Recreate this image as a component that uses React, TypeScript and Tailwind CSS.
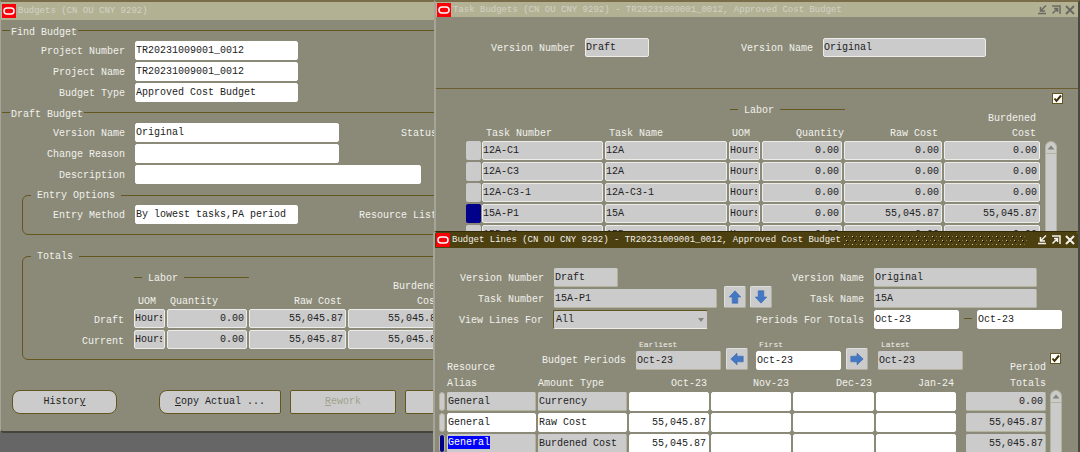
import type { ReactNode } from 'react';
import clsx from 'clsx';

type FieldProps = {
  id?: string;
  label?: string;
  value?: string;
  className?: string;
  tone?: 'white' | 'gray' | 'sunken';
  align?: 'left' | 'right';
};

const tones = {
  white: 'bg-white border-white',
  gray: 'bg-[#cbcbcb] border-[#ecece8]',
  sunken: 'bg-[#cbcbcb] border-[#cbcbcb] border-r-[#b4b39c] border-b-[#b4b39c]',
};

function Field({ id, label, value = '', className, tone = 'white', align = 'left' }: FieldProps) {
  return (
    <input
      id={id}
      aria-label={label}
      defaultValue={value}
      readOnly={tone !== 'white'}
      className={clsx(
        'block h-[19px] rounded-xs border pr-0.5 pb-px text-[#222] outline-none',
        tones[tone],
        align === 'right' && 'text-right',
        className
      )}
    />
  );
}

function Label({ htmlFor, className, children }: { htmlFor: string; className?: string; children: ReactNode }) {
  return (
    <label htmlFor={htmlFor} className={clsx('shrink-0 pt-[5px] pr-2.5 text-right whitespace-nowrap', className)}>
      {children}
    </label>
  );
}

function OracleLogo() {
  return (
    <svg viewBox="0 0 14 14" className="size-3.5 shrink-0" aria-hidden="true">
      <rect width="14" height="14" fill="#fb0007" />
      <rect x="2" y="4" width="10" height="6" rx="3" fill="none" stroke="#fff" strokeWidth="1.5" />
    </svg>
  );
}

function WindowControls() {
  return (
    <div className="flex shrink-0 gap-0.5 pr-0.5">
      <button type="button" aria-label="Minimize" className="size-3">
        <svg viewBox="0 0 12 12" fill="none" stroke="currentColor" strokeWidth="1.5">
          <path d="M10 1.5 5 6.5M4.5 3v4H9M2 9.500h8" />
        </svg>
      </button>
      <button type="button" aria-label="Maximize" className="size-3">
        <svg viewBox="0 0 12 12" fill="none" stroke="currentColor" strokeWidth="1.5">
          <path d="M2.500 9.500 7 5M4 4.500h3.500V8M2 2h8v8" />
        </svg>
      </button>
      <button type="button" aria-label="Close" className="size-3">
        <svg viewBox="0 0 12 12" fill="none" stroke="currentColor" strokeWidth="2">
          <path d="m2 2 8 8M10 2l-8 8" />
        </svg>
      </button>
    </div>
  );
}

function TitleBar({ title, active, controls, className }: { title: string; active?: boolean; controls?: boolean; className?: string }) {
  return (
    <header
      className={clsx(
        'flex items-center gap-0.5 pl-px text-[9px]',
        active ? 'bg-[#4d4010] text-[#f0efe8]' : 'bg-[#b3b194] text-[#d2d1c4]',
        className
      )}
    >
      <OracleLogo />
      <h2 className="shrink-0 whitespace-pre">{title}</h2>
      <div className="flex-1 pr-1.5">
        {active && (
          <svg className="block h-2.5 w-full" aria-hidden="true">
            <defs>
              <pattern id="grip" width="8" height="8" patternUnits="userSpaceOnUse">
                <rect x="1" y="1" width="1" height="1" fill="#d0c8a6" />
                <rect x="2" y="2" width="1" height="1" fill="#0f0b00" />
                <rect x="5" y="1" width="1" height="1" fill="#857947" />
                <rect x="3" y="5" width="1" height="1" fill="#d0c8a6" />
                <rect x="4" y="6" width="1" height="1" fill="#0f0b00" />
                <rect x="7" y="5" width="1" height="1" fill="#857947" />
              </pattern>
            </defs>
            <rect width="100%" height="100%" fill="url(#grip)" />
          </svg>
        )}
      </div>
      {controls && (
        <div className={active ? 'text-[#f4f3ee]' : 'text-[#6b6a62]'}>
          <WindowControls />
        </div>
      )}
    </header>
  );
}

function SectionHeading({ children }: { children: ReactNode }) {
  return (
    <div className="flex h-3.5 items-start">
      <span className="mt-1 h-px w-2 bg-[#64561f]" />
      <h3 className="px-px pt-px">{children}</h3>
      <span className="mt-1 h-px flex-1 bg-[#64561f]" />
    </div>
  );
}

function LaborHeading({ className }: { className?: string }) {
  return (
    <div className={clsx('flex h-3 items-start', className)}>
      <span className="mt-1 h-px w-2 bg-[#64561f]" />
      <span className="px-1.5">Labor</span>
      <span className="mt-1 h-px flex-1 bg-[#64561f]" />
    </div>
  );
}

function ScrollBar() {
  return (
    <div className="w-3 shrink-0 rounded-t-md border border-[#b4b39c] bg-[#cbcbcb]">
      <button type="button" aria-label="Scroll up" className="flex h-3 w-full items-center justify-center border-b border-[#b4b39c]">
        <svg viewBox="0 0 8 5" className="w-2" aria-hidden="true">
          <path d="M4 0.500 7.500 4.500h-7z" fill="#85847a" />
        </svg>
      </button>
    </div>
  );
}

function CheckBox({ label }: { label: string }) {
  return (
    <span className="relative block size-[11px]">
      <input
        type="checkbox"
        aria-label={label}
        defaultChecked
        className="block size-[11px] appearance-none border border-[#64561f] bg-white"
      />
      <svg viewBox="0 0 11 11" className="pointer-events-none absolute inset-0" aria-hidden="true">
        <path d="m2.500 5.500 2 2.500L9 2.500" fill="none" stroke="#3c3108" strokeWidth="2" />
      </svg>
    </span>
  );
}

const rotations = {
  up: '',
  right: 'rotate-90',
  down: 'rotate-180',
  left: '-rotate-90',
};

function ArrowButton({ direction, label }: { direction: keyof typeof rotations; label: string }) {
  return (
    <button
      type="button"
      aria-label={label}
      className="flex size-[22px] shrink-0 items-center justify-center rounded-xs border border-[#dededc] border-r-[#b0afa0] border-b-[#b0afa0] bg-[#cbcbcb]"
    >
      <svg viewBox="0 0 14 14" className={clsx('size-3.5', rotations[direction])} aria-hidden="true">
        <path d="M7 .8 12.800 7H9.800v6.200H4.200V7H1.200z" fill="#4478c4" stroke="#3a69ad" strokeWidth=".6" />
      </svg>
    </button>
  );
}

function BudgetsWindow() {
  const totals = ['Draft', 'Current'];

  return (
    <section className="absolute top-0 left-0 h-[433px] w-[760px] rounded-bl-sm border-t-2 border-b-2 border-l border-t-[#796c49] border-b-[#45443a] border-l-[#a5a497] bg-[#8b8a78]">
      <TitleBar title="Budgets (CN OU CNY 9292)" className="h-[18px]" />
      <div className="pt-1.5 pl-px">
        <SectionHeading>Find Budget</SectionHeading>
        <div className="flex flex-col gap-0.5 pt-px">
          <div className="flex">
            <Label htmlFor="project-number" className="w-[133px]">Project Number</Label>
            <Field id="project-number" value="TR20231009001_0012" className="w-[163px]" />
          </div>
          <div className="flex">
            <Label htmlFor="project-name" className="w-[133px]">Project Name</Label>
            <Field id="project-name" value="TR20231009001_0012" className="w-[163px]" />
          </div>
          <div className="flex">
            <Label htmlFor="budget-type" className="w-[133px]">Budget Type</Label>
            <Field id="budget-type" value="Approved Cost Budget" className="w-[163px]" />
          </div>
        </div>

        <div className="pt-1.5">
          <SectionHeading>Draft Budget</SectionHeading>
        </div>
        <div className="flex flex-col gap-0.5 pt-px">
          <div className="flex">
            <Label htmlFor="version-name" className="w-[133px]">Version Name</Label>
            <Field id="version-name" value="Original" className="w-[204px]" />
            <Label htmlFor="status" className="w-[108px]">Status</Label>
            <Field id="status" className="w-[163px]" />
          </div>
          <div className="flex">
            <Label htmlFor="change-reason" className="w-[133px]">Change Reason</Label>
            <Field id="change-reason" className="w-[204px]" />
          </div>
          <div className="flex">
            <Label htmlFor="description" className="w-[133px]">Description</Label>
            <Field id="description" className="w-[286px]" />
          </div>
        </div>

        <fieldset className="mt-1 mr-4 ml-5 rounded-md border border-[#64561f] pb-2.5">
          <legend className="ml-2 px-1.5 pt-0.5 leading-3">Entry Options</legend>
          <div className="flex pt-[3px]">
            <Label htmlFor="entry-method" className="w-[112px]">Entry Method</Label>
            <div className="w-[204px]">
              <Field id="entry-method" value="By lowest tasks,PA period" className="w-[163px]" />
            </div>
            <Label htmlFor="resource-list" className="w-[108px]">Resource List</Label>
            <Field id="resource-list" className="w-[163px]" />
          </div>
        </fieldset>

        <fieldset className="mt-3.5 mr-4 ml-5 rounded-md border border-[#64561f] pb-2">
          <legend className="ml-2 px-1.5 pt-0.5 leading-3">Totals</legend>
          <LaborHeading className="mt-2.5 ml-[111px] w-[115px]" />
          <table className="-mt-1.5 w-[424px] table-fixed border-collapse">
            <thead>
              <tr className="h-7 align-bottom leading-[15px]">
                <th className="w-[111px]" aria-label="Budget" />
                <th className="w-[33px] pl-1 text-left font-normal">UOM</th>
                <th className="w-[82px] pl-[3px] text-left font-normal">Quantity</th>
                <th className="w-[99px] pr-1.5 text-right font-normal">Raw Cost</th>
                <th className="w-[99px] pr-1.5 text-right font-normal">Burdened<br />Cost</th>
              </tr>
            </thead>
            <tbody>
              {totals.map((name) => (
                <tr key={name}>
                  <th className="pt-0.5 pr-2.5 text-right font-normal">{name}</th>
                  <td className="pr-0.5 pb-0.5"><Field tone="gray" label={`${name} UOM`} value="Hours" className="w-full" /></td>
                  <td className="pr-0.5 pb-0.5"><Field tone="gray" label={`${name} quantity`} value="0.00" align="right" className="w-full" /></td>
                  <td className="pr-0.5 pb-0.5"><Field tone="gray" label={`${name} raw cost`} value="55,045.87" align="right" className="w-full" /></td>
                  <td className="pr-0.5 pb-0.5"><Field tone="gray" label={`${name} burdened cost`} value="55,045.87" align="right" className="w-full" /></td>
                </tr>
              ))}
            </tbody>
          </table>
        </fieldset>

        <div className="mt-[30px] flex pl-2.5 text-[#222]">
          <button type="button" className="h-6 w-[105px] rounded-lg border border-[#64561f] bg-[#cbcbcb]">
            Histor<u>y</u>
          </button>
          <button type="button" className="ml-[42px] h-6 w-[122px] rounded-l-lg rounded-r-xs border border-[#64561f] bg-[#cbcbcb]">
            <u>C</u>opy Actual ...
          </button>
          <button type="button" disabled className="ml-[9px] h-6 w-[106px] rounded-xs border border-[#64561f] bg-[#cbcbcb] text-[#a3a28e]">
            <u>R</u>ework
          </button>
          <button type="button" className="ml-[9px] h-6 w-[106px] rounded-xs border border-[#64561f] bg-[#cbcbcb]">
            <u>S</u>ubmit
          </button>
        </div>
      </div>
    </section>
  );
}

const tasks = [
  { number: '12A-C1', name: '12A', cost: '0.00' },
  { number: '12A-C3', name: '12A', cost: '0.00' },
  { number: '12A-C3-1', name: '12A-C3-1', cost: '0.00' },
  { number: '15A-P1', name: '15A', cost: '55,045.87', current: true },
  { number: '15B-C1', name: '15B', cost: '0.00' },
];

function TaskBudgetsWindow() {
  return (
    <section className="absolute top-0 right-0 left-[434px] h-[260px] border-t-2 border-r-2 border-l-2 border-t-[#796c49] border-r-[#4a4940] border-l-[#a5a497] bg-[#8b8a78]">
      <TitleBar controls title="Task Budgets (CN OU CNY 9292) - TR20231009001_0012, Approved Cost Budget" className="h-[15px]" />
      <div className="flex pt-[21px]">
        <Label htmlFor="task-version-number" className="w-[149px]">Version Number</Label>
        <Field id="task-version-number" tone="gray" value="Draft" className="w-16" />
        <Label htmlFor="task-version-name" className="w-[174px]">Version Name</Label>
        <Field id="task-version-name" tone="gray" value="Original" className="w-[163px]" />
      </div>
      <hr className="mt-[31px] border-[#6b5d30]" />
      <div className="flex h-[15px] items-end">
        <div className="flex-1" />
        <div className="mr-[15px] self-start pt-1"><CheckBox label="Show all tasks" /></div>
      </div>
      <LaborHeading className="mt-px ml-[294px] w-[115px]" />
      <div className="-mt-1.5 flex pl-[30px]">
        <table className="w-[576px] shrink-0 table-fixed border-collapse">
          <thead>
            <tr className="h-7 align-bottom leading-[15px]">
              <th className="w-4" aria-label="Current record" />
              <th className="w-[123px] pl-1 text-left font-normal">Task Number</th>
              <th className="w-[124px] pl-1 text-left font-normal">Task Name</th>
              <th className="w-[33px] pl-[3px] text-left font-normal">UOM</th>
              <th className="w-[82px] text-right font-normal whitespace-nowrap">Quantity</th>
              <th className="w-[100px] pr-1.5 text-right font-normal">Raw Cost</th>
              <th className="w-[98px] pr-1.5 text-right font-normal">Burdened<br />Cost</th>
            </tr>
          </thead>
          <tbody>
            {tasks.map((task) => (
              <tr key={task.number}>
                <td className="pr-px pb-0.5">
                  <div className={clsx('h-[19px] rounded-xs', task.current ? 'bg-[#00008b]' : 'bg-[#cbcbcb]')} />
                </td>
                <td className="pr-0.5 pb-0.5"><Field tone="gray" label="Task number" value={task.number} className="w-full" /></td>
                <td className="pr-0.5 pb-0.5"><Field tone="gray" label="Task name" value={task.name} className="w-full" /></td>
                <td className="pr-0.5 pb-0.5"><Field tone="gray" label="UOM" value="Hours" className="w-full" /></td>
                <td className="pr-0.5 pb-0.5"><Field tone="gray" label="Quantity" value="0.00" align="right" className="w-full" /></td>
                <td className="pr-0.5 pb-0.5"><Field tone="gray" label="Raw cost" value={task.cost} align="right" className="w-full" /></td>
                <td className="pr-0.5 pb-0.5"><Field tone="gray" label="Burdened cost" value={task.cost} align="right" className="w-full" /></td>
              </tr>
            ))}
          </tbody>
        </table>
        <div className="flex pt-[30px] pl-[3px]"><ScrollBar /></div>
      </div>
    </section>
  );
}

const lines = [
  { alias: 'General', type: 'Currency', oct: '', total: '0.00', tone: 'sunken' as const },
  { alias: 'General', type: 'Raw Cost', oct: '55,045.87', total: '55,045.87', tone: 'white' as const },
  { alias: 'General', type: 'Burdened Cost', oct: '55,045.87', total: '55,045.87', tone: 'sunken' as const, current: true },
];

function BudgetLinesWindow() {
  return (
    <section className="absolute top-[231px] right-0 bottom-0 left-[433px] overflow-hidden rounded-t-sm border-t border-r-2 border-l-2 border-t-[#33290a] border-r-[#4a4940] border-l-[#a5a497] bg-[#8b8a78]">
      <TitleBar active controls title="Budget Lines (CN OU CNY 9292) - TR20231009001_0012, Approved Cost Budget" className="h-4" />
      <div className="flex flex-col gap-0.5 pt-5">
        <div className="flex">
          <Label htmlFor="line-version-number" className="w-[119px]">Version Number</Label>
          <div className="w-[163px]">
            <Field id="line-version-number" tone="sunken" value="Draft" className="w-16" />
          </div>
          <Label htmlFor="line-version-name" className="w-[157px]">Version Name</Label>
          <Field id="line-version-name" tone="sunken" value="Original" className="w-[163px]" />
        </div>
        <div className="flex h-[19px]">
          <Label htmlFor="line-task-number" className="w-[119px]">Task Number</Label>
          <Field id="line-task-number" tone="sunken" value="15A-P1" className="w-[163px]" />
          <div className="flex w-[55px] items-center gap-1 pb-1 pl-[7px]">
            <ArrowButton direction="up" label="Previous task" />
            <ArrowButton direction="down" label="Next task" />
          </div>
          <Label htmlFor="line-task-name" className="w-[102px]">Task Name</Label>
          <Field id="line-task-name" tone="sunken" value="15A" className="w-[163px]" />
        </div>
        <div className="flex">
          <Label htmlFor="view-lines" className="w-[118px]">View Lines For</Label>
          <div className="relative w-[164px]">
            <select
              id="view-lines"
              className="block h-[19px] w-[155px] appearance-none rounded-xs border border-t-[#64561f] border-r-[#8f8d75] border-b-[#ecece8] border-l-[#64561f] bg-[#cbcbcb] pl-0.5 text-[#222]"
            >
              <option>All</option>
            </select>
            <svg viewBox="0 0 6 4" className="pointer-events-none absolute top-2 left-[145px] w-1.5" aria-hidden="true">
              <path d="M0 0h6L3 4z" fill="#85847a" />
            </svg>
          </div>
          <Label htmlFor="period-from" className="w-[157px]">Periods For Totals</Label>
          <Field id="period-from" value="Oct-23" className="w-[85px]" />
          <span className="mx-[5px] mt-2 h-px w-2 bg-[#64561f]" />
          <Field label="Periods for totals, to" value="Oct-23" className="w-[85px]" />
        </div>
      </div>

      <div className="flex items-end pt-2.5">
        <Label htmlFor="earliest" className="w-[201px] pb-[3px]">Budget Periods</Label>
        <div className="w-[85px]">
          <label htmlFor="earliest" className="block pl-[3px] text-[8px] leading-3">Earliest</label>
          <Field id="earliest" tone="sunken" value="Oct-23" className="w-full" />
        </div>
        <div className="pr-2 pl-[5px]"><ArrowButton direction="left" label="Earlier periods" /></div>
        <div className="w-[85px]">
          <label htmlFor="first" className="block pl-[3px] text-[8px] leading-3">First</label>
          <Field id="first" value="Oct-23" className="w-full" />
        </div>
        <div className="pr-2.5 pl-[5px]"><ArrowButton direction="right" label="Later periods" /></div>
        <div className="w-[85px]">
          <label htmlFor="latest" className="block pl-[3px] text-[8px] leading-3">Latest</label>
          <Field id="latest" tone="sunken" value="Oct-23" className="w-full" />
        </div>
        <div className="flex-1" />
        <div className="mr-[17px] pb-1.5"><CheckBox label="Show period totals" /></div>
      </div>

      <div className="-mt-2.5 flex pl-1">
        <table className="w-[609px] shrink-0 table-fixed border-collapse">
          <thead>
            <tr className="h-8 align-bottom leading-4">
              <th className="w-2" aria-label="Current record" />
              <th className="w-[91px] text-left font-normal">Resource<br />Alias</th>
              <th className="w-[91px] text-left font-normal whitespace-nowrap">Amount Type</th>
              <th className="w-[82px] pr-1 text-right font-normal">Oct-23</th>
              <th className="w-[82px] pr-1 text-right font-normal">Nov-23</th>
              <th className="w-[83px] pr-1 text-right font-normal">Dec-23</th>
              <th className="w-[90px] pr-3 text-right font-normal">Jan-24</th>
              <th className="w-[82px] pr-0.5 text-right font-normal">Period<br />Totals</th>
            </tr>
          </thead>
          <tbody>
            {lines.map((line) => (
              <tr key={line.type}>
                <td className="pr-0.5 pb-0.5">
                  <div className={clsx('h-[19px] rounded-sm border border-[#b4b39c]', line.current ? 'bg-[#00008b]' : 'bg-[#cbcbcb]')} />
                </td>
                <td className="pr-0.5 pb-0.5">
                  {line.current ? (
                    <div className="h-[19px] rounded-xs border border-[#cbcbcb] border-r-[#b4b39c] border-b-[#b4b39c] bg-[#cbcbcb] leading-4">
                      <mark className="bg-[#0000ff] py-px text-white">{line.alias}</mark>
                    </div>
                  ) : (
                    <Field tone={line.tone} label="Resource alias" value={line.alias} className="w-full" />
                  )}
                </td>
                <td className="pr-0.5 pb-0.5"><Field tone={line.tone} label="Amount type" value={line.type} className="w-full" /></td>
                <td className="pr-0.5 pb-0.5"><Field label="Oct-23" value={line.oct} align="right" className="w-full" /></td>
                <td className="pr-0.5 pb-0.5"><Field label="Nov-23" className="w-full" /></td>
                <td className="pr-0.5 pb-0.5"><Field label="Dec-23" className="w-full" /></td>
                <td className="pr-2.5 pb-0.5"><Field label="Jan-24" className="w-full" /></td>
                <td className="pr-0.5 pb-0.5"><Field tone="sunken" label="Period total" value={line.total} align="right" className="w-full" /></td>
              </tr>
            ))}
          </tbody>
        </table>
        <div className="flex pt-[30px] pl-0.5"><ScrollBar /></div>
      </div>
    </section>
  );
}

export default function App() {
  return (
    <main className="relative h-screen overflow-hidden bg-[#666666] font-['Liberation_Mono',monospace] text-[10px] leading-3 text-[#f1f1ec]">
      <BudgetsWindow />
      <TaskBudgetsWindow />
      <BudgetLinesWindow />
    </main>
  );
}
